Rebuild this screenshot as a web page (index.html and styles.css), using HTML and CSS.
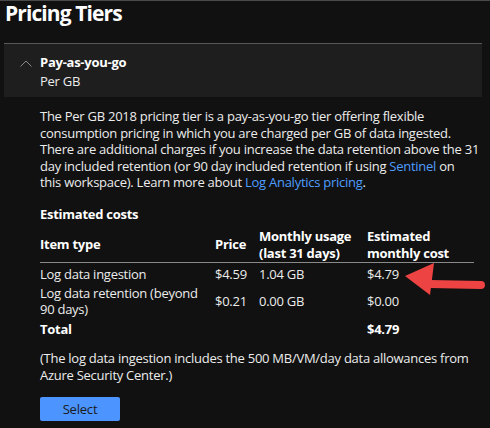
FILE: index.html
```html
<!DOCTYPE html>
<html>
<head>
<meta charset="utf-8">
<link rel="stylesheet" href="styles.css">
</head>
<body>
<div class="page">
  <h1 class="title">Pricing Tiers</h1>
  <div class="card">
    <svg class="chevron" width="12" height="7" viewBox="0 0 12 7"><path d="M0.5 6.5 L6 1 L11.5 6.5" fill="none" stroke="#8a8a8a" stroke-width="1"/></svg>
    <div class="card-text">
      <div class="tier-name">Pay-as-you-go</div>
      <div class="tier-sub">Per GB</div>
    </div>
  </div>
  <div class="content">
    <p class="desc">The Per GB 2018 pricing tier is a pay-as-you-go tier offering flexible<br>consumption pricing in which you are charged per GB of data ingested.<br>There are additional charges if you increase the data retention above the 31<br>day included retention (or 90 day included retention if using <a href="#">Sentinel</a> on<br>this workspace). Learn more about <a href="#">Log Analytics pricing</a>.</p>
    <div class="section-title">Estimated costs</div>
    <table class="costs">
      <thead>
        <tr>
          <th class="c1">Item type</th>
          <th class="c2">Price</th>
          <th class="c3">Monthly usage<br>(last 31 days)</th>
          <th class="c4">Estimated<br>monthly cost</th>
        </tr>
      </thead>
      <tbody>
        <tr class="first">
          <td>Log data ingestion</td>
          <td>$4.59</td>
          <td>1.04 GB</td>
          <td>$4.79</td>
        </tr>
        <tr>
          <td>Log data retention (beyond<br>90 days)</td>
          <td>$0.21</td>
          <td>0.00 GB</td>
          <td>$0.00</td>
        </tr>
        <tr class="total">
          <td>Total</td>
          <td></td>
          <td></td>
          <td>$4.79</td>
        </tr>
      </tbody>
    </table>
    <p class="note">(The log data ingestion includes the 500 MB/VM/day data allowances from<br>Azure Security Center.)</p>
    <button class="select">Select</button>
  </div>
  <svg class="arrow" width="90" height="40" viewBox="400 260 90 40">
    <line x1="430" y1="285" x2="481" y2="286" stroke="#ee4343" stroke-width="8" stroke-linecap="round"/>
    <polygon points="405,277 434,264 430,296" fill="#ee4343"/>
  </svg>
</div>
</body>
</html>
```
FILE: styles.css
```css
html, body {
  margin: 0;
  padding: 0;
  background: #111111;
}
body {
  font-family: "Open Sans", "Noto Sans", sans-serif;
  font-size: 13px;
  letter-spacing: -0.26px;
  color: #ececec;
}
.page {
  position: relative;
  width: 490px;
  height: 428px;
  border-top: 1px solid #4a4a4a;
  box-sizing: border-box;
  overflow: hidden;
}
.title {
  margin: 0;
  padding: 0 0 0 5px;
  font-size: 21px;
  font-weight: 700;
  letter-spacing: -0.9px;
  line-height: 24px;
  color: #ffffff;
  height: 42px;
}
.card {
  margin-left: 4px;
  width: 478px;
  height: 53px;
  background: #1e1e1e;
  border-top: 1px solid #585858;
  display: flex;
  align-items: flex-start;
}
.chevron {
  margin: 16px 0 0 16px;
  flex: none;
}
.card-text {
  margin: 9px 0 0 8px;
  line-height: 19px;
}
.tier-name {
  font-weight: 700;
  color: #ffffff;
}
.tier-sub {
  color: #ececec;
}
.content {
  padding: 0 0 0 40px;
}
.desc {
  margin: 11px 0 0 0;
  line-height: 16.5px;
}
.desc a {
  color: #4f9dff;
  text-decoration: none;
}
.section-title {
  font-weight: 700;
  color: #ffffff;
  margin-top: 15px;
  line-height: 16.5px;
}
.costs {
  margin-top: 6px;
  border-collapse: collapse;
  width: 434px;
  line-height: 16.5px;
}
.costs th {
  text-align: left;
  vertical-align: middle;
  font-weight: 700;
  color: #ffffff;
  padding: 0 0 1px 0;
  border-bottom: 1px solid #8a8a8a;
}
.costs td {
  padding: 1px 0;
  vertical-align: middle;
}
.costs tr.first td {
  padding-top: 3px;
}
.c1 { width: 175px; }
.c2 { width: 44px; }
.c3 { width: 108px; }
.costs tr.total td {
  font-weight: 700;
  color: #ffffff;
  padding-top: 2px;
}
.note {
  margin: 12px 0 0 0;
  line-height: 16.5px;
}
.select {
  display: block;
  margin-top: 14px;
  width: 80px;
  height: 24px;
  border: none;
  border-radius: 2px;
  background: #4c94ff;
  color: #1a1a1a;
  font-family: inherit;
  font-size: 13px;
  letter-spacing: -0.2px;
  padding: 0;
}
.arrow {
  position: absolute;
  left: 400px;
  top: 258px;
}
```
